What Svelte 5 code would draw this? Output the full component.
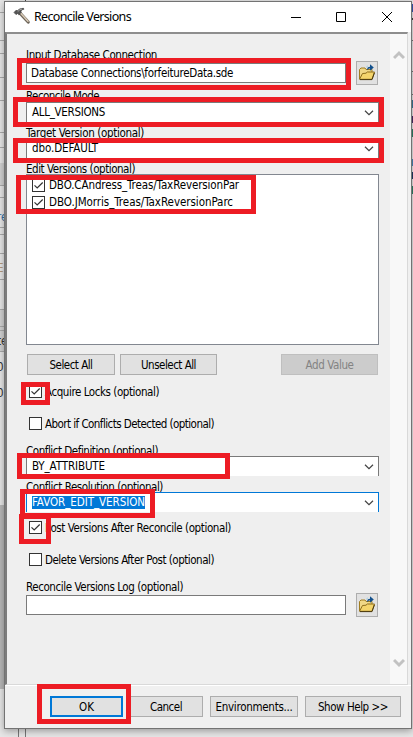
<script>
  // Adjusts tracking so that a caption fills its designed width.
  function fit(node, width) {
    const range = document.createRange();
    range.selectNodeContents(node);
    const natural = range.getBoundingClientRect().width;
    const count = node.textContent.length;
    node.style.letterSpacing = `${(width - natural) / count}px`;
  }
  const versions = [
    { name: 'DBO.CAndress_Treas/TaxReversionPar', w: 190 },
    { name: 'DBO.JMorris_Treas/TaxReversionParc', w: 184 }
  ];
  const marks = [
    [17, 58, 334, 32], [13, 97, 371, 30], [13, 138, 371, 25],
    [16, 175, 240, 39], [21, 382, 29, 23], [17, 453, 213, 26],
    [20, 489, 135, 29], [19, 514, 32, 30], [37, 684, 94, 40]
  ];
  const leftLines = [12, 40, 53, 77, 100, 132, 147, 185, 197, 227, 234, 253, 279, 309, 326, 330, 351];
  const leftText = [
    ['re', 211, '#2f6fa5'], ['E', 262, '#b49a7c'], ['te', 335, '#333'],
    ['0', 361, '#333'], ['0', 387, '#333']
  ];
  const rightBits = [[4, 8, '#3956b0'], [18, 2, '#444'], [40, 1, '#777'], [71, 1, '#777'], [94, 1, '#777'], [100, 8, '#3e7a9b'], [116, 7, '#4a2a66'], [129, 8, '#2e8068'], [159, 7, '#4b88b8'], [172, 7, '#223a66'], [186, 8, '#2e8068']];
</script>

{#snippet label(text, w)}
  <div class="label"><span use:fit={w}>{text}</span></div>
{/snippet}

{#snippet box(checked)}
  <svg class="box" width="13" height="13" viewBox="0 0 13 13">
    <rect x=".5" y=".5" width="12" height="12" fill="#fff" stroke="#333" />
    {#if checked}<path d="M2.5 6.3 5.2 9 10.7 3.5" fill="none" stroke="#333" stroke-width="1.2" />{/if}
  </svg>
{/snippet}

{#snippet check(text, w, checked)}
  <div class="check">{@render box(checked)}<span use:fit={w}>{text}</span></div>
{/snippet}

{#snippet combo(text, w, focus)}
  <div class="combo" class:focus>
    <span class="value" class:selected={focus} use:fit={w}>{text}</span>
    <svg width="10" height="6" viewBox="0 0 10 6"><path d="M1 .8 5 4.6 9 .8" fill="none" stroke="#444" stroke-width="1.25" /></svg>
  </div>
{/snippet}

{#snippet folder()}
  <div class="folder">
    <svg width="18" height="18" viewBox="0 0 18 18">
      <path d="M1.5 15V5.5L3 4h4l1 1.5h6V9" fill="#f0d887" stroke="#a07c20" />
      <path d="M1.5 15.3 4.5 9.5 8 9.2 9.3 8H16.5L14 15.3z" fill="#f4d56c" stroke="#8d6d1b" />
      <path d="M2 15.6H14L16.4 9" fill="none" stroke="#4a3a10" />
      <path d="M9 5.2Q9.3 2.8 12 2.8V.3L15.8 3.5 12 6.8V4.6Q10.4 4.5 9.8 6z" fill="#12508c" />
      <path d="M8.2 3.2 10 1.8" stroke="#9fd0e8" />
    </svg>
  </div>
{/snippet}

<main>
  <div class="backdrop">
    <i class="band one"></i><i class="band two"></i><i class="band three"></i>
    {#each leftLines as y}<i class="rule" style="top:{y}px"></i>{/each}
    {#each leftText as [t, y, c]}<b style="top:{y}px;color:{c}">{t}</b>{/each}
    {#each rightBits as [y, h, c]}<i class="bit" style="top:{y}px;height:{h}px;background:{c}"></i>{/each}
    <i class="seam top"></i><i class="seam bottom"></i>
  </div>

  <section class="window">
    <header>
      <svg class="hammer" width="18" height="18" viewBox="0 0 18 18">
        <path d="M7 6.2 15.2 15" stroke="#6d6459" stroke-width="3.2" stroke-linecap="round" />
        <path d="M7.2 5.8 15 14.2" stroke="#d9cbb7" stroke-width="1.5" stroke-linecap="round" />
        <path d="M1 5.5 3 3.3 4.2 3.8Q6.5 1 10.5 1.3L11 2.2Q8.5 2.4 7.9 4.3L8.4 5.3 5.8 7.8 4.8 6.4 3 7.6z" fill="#555" stroke="#393939" stroke-width=".6" />
        <path d="M4.7 4.6Q6.5 2.5 9 2" stroke="#aaa" fill="none" />
      </svg>
      <span class="title" use:fit={97}>Reconcile Versions</span>
      <svg class="controls" width="104" height="12" viewBox="0 0 104 12" fill="none" stroke="#000">
        <path d="M1 6.5H11M46.5 1.5H55.5V10.5H46.5zM92 1 102 11M102 1 92 11" />
      </svg>
    </header>

    <div class="panel">
      <div class="form">
        {@render label('Input Database Connection', 131)}
        <div class="field">
          <div class="input"><span use:fit={202}>Database Connections\forfeitureData.sde</span></div>
          {@render folder()}
        </div>
        {@render label('Reconcile Mode', 73)}
        {@render combo('ALL_VERSIONS', 73, false)}
        {@render label('Target Version (optional)', 118)}
        {@render combo('dbo.DEFAULT', 66, false)}
        {@render label('Edit Versions (optional)', 109)}
        <div class="list">
          {#each versions as v}{@render check(v.name, v.w, true)}{/each}
        </div>
        <div class="actions">
          <div class="button select"><span use:fit={43}>Select All</span></div>
          <div class="button unselect"><span use:fit={55}>Unselect All</span></div>
          <div class="button add"><span use:fit={48}>Add Value</span></div>
        </div>
        <div class="checks first">
          {@render check('Acquire Locks (optional)', 114, true)}
          {@render check('Abort if Conflicts Detected (optional)', 169, false)}
        </div>
        {@render label('Conflict Definition (optional)', 132)}
        {@render combo('BY_ATTRIBUTE', 73, false)}
        {@render label('Conflict Resolution (optional)', 137)}
        {@render combo('FAVOR_EDIT_VERSION', 113, true)}
        <div class="checks second">
          {@render check('Post Versions After Reconcile (optional)', 186, true)}
          {@render check('Delete Versions After Post (optional)', 169, false)}
        </div>
        {@render label('Reconcile Versions Log (optional)', 157)}
        <div class="field"><div class="input"></div>{@render folder()}</div>
      </div>
      <div class="scroll">
        <svg width="12" height="10" viewBox="0 0 12 10"><path d="M1 8 6 3 11 8" fill="none" stroke="#c2c2c2" stroke-width="3" /></svg>
        <svg width="12" height="10" viewBox="0 0 12 10"><path d="M1 2 6 7 11 2" fill="none" stroke="#c2c2c2" stroke-width="3" /></svg>
      </div>
    </div>

    <footer>
      <div class="button ok"><span use:fit={15}>OK</span></div>
      <div class="button cancel"><span use:fit={32}>Cancel</span></div>
      <div class="button env"><span use:fit={77}>Environments...</span></div>
      <div class="button help"><span use:fit={70}>Show Help &gt;&gt;</span></div>
    </footer>
  </section>

  {#each marks as [x, y, w, h]}
    <div class="mark" style="left:{x}px;top:{y}px;width:{w}px;height:{h}px"></div>
  {/each}
</main>

<style>
  main {
    position: relative;
    width: 413px;
    height: 737px;
    overflow: hidden;
    box-sizing: border-box;
    padding: 1px 1px 0 4px;
    background: #e6e6e6;
    font: 11.5px/13px "DejaVu Sans Condensed", "DejaVu Sans", sans-serif;
    color: #000;
  }
  main * { box-sizing: border-box; }
  svg { display: block; flex: none; }
  span { white-space: pre; }
  .backdrop { position: absolute; inset: 0; overflow: hidden; }
  .backdrop i, .backdrop b { position: absolute; }
  .backdrop b { left: -3px; font-weight: 400; }
  .rule { left: 0; width: 5px; height: 1px; background: #aaa; }
  .bit { right: 0; width: 1px; }
  .band { left: 0; width: 5px; background: #d2d2d2; }
  .one { top: 163px; height: 23px; }
  .two { top: 310px; height: 41px; }
  .three { top: 505px; height: 184px; background: #b8b8b8; }
  .seam.top { left: 25px; top: 0; width: 1px; height: 1px; background: #444; }
  .seam.bottom { left: 18px; top: 729px; width: 8px; height: 8px; border: solid #777; border-width: 0 1px; }
  .window {
    position: relative;
    width: 408px;
    height: 728px;
    border: 1px solid #737373;
    background: #f0f0f0;
    box-shadow: 0 2px 7px #0005;
  }
  header {
    display: flex;
    align-items: center;
    height: 30px;
    padding: 0 17px 0 8px;
    background: #fff;
  }
  .title { margin-left: 3px; font: 12.5px/16px "Noto Sans", sans-serif; }
  .hammer { margin-top: -2px; }
  .controls { margin-left: auto; }
  .panel {
    display: flex;
    height: 653px;
    border: 1px solid #d9d9d9;
    border-top: 2px solid #8e8e8e;
    border-left: 2px solid #7c7c7c;
    margin-right: 3px;
    background: #efefef;
  }
  .form { width: 383px; padding: 13px 0 0 19px; }
  .label { height: 12px; line-height: 14px; margin-top: 4px; padding-top: 1px; display: flex; align-items: center; }
  .label:first-child { height: 14px; margin-top: 0; }
  .field { display: flex; align-items: center; height: 24px; }
  .input {
    width: 320px;
    height: 20px;
    border: 1px solid #7a7a7a;
    background: #fff;
    padding: 3px 4px;
  }
  .folder {
    margin-left: 10px;
    width: 22px;
    height: 24px;
    border: 1px solid #adadad;
    background: #e1e1e1;
    display: flex;
    justify-content: center;
    align-items: center;
  }
  .field + .label { height: 13px; }
  .combo {
    width: 353px;
    height: 20px;
    border: 1px solid #7a7a7a;
    border-bottom: 0;
    background: #fff;
    display: flex;
    align-items: center;
    justify-content: space-between;
    padding: 0 4px 0 5px;
  }
  .focus { border-color: #0078d7; }
  .selected { background: #0078d7; color: #fff; }
  .list {
    width: 353px;
    height: 171px;
    padding: 4px 5px;
    border: 1px solid #828790;
    background: #fff;
    display: flex;
    flex-direction: column;
    gap: 4px;
  }
  .check { display: flex; align-items: center; gap: 3px; height: 13px; }
  .list .check { gap: 4px; }
  .checks span { line-height: 15px; padding-top: 1px; }
  .actions { display: flex; margin: 9px 0 0 1px; height: 21px; }
  .button {
    height: 21px;
    border: 1px solid #adadad;
    background: #e1e1e1;
    display: flex;
    justify-content: center;
    align-items: center;
  }
  .button span { padding-top: 1px; }
  .select { width: 88px; }
  .unselect { width: 97px; margin-left: 5px; }
  .add { width: 97px; margin-left: 64px; background: #ccc; border-color: #bfbfbf; color: #838383; }
  .checks { display: flex; flex-direction: column; gap: 19px; padding-left: 3px; }
  .first { padding-top: 10px; padding-bottom: 10px; }
  .second { padding-top: 9px; padding-bottom: 10px; }
  .second + .label { height: 13px; }
  .scroll {
    width: 17px;
    background: #f8f8f8;
    display: flex;
    flex-direction: column;
    justify-content: space-between;
    align-items: center;
    padding: 16px 0;
  }
  footer {
    display: flex;
    height: 43px;
    border-top: 1px solid #fff;
    padding: 10px 0 0 45px;
  }
  .ok { width: 73px; border: 2px solid #0078d7; }
  .cancel { width: 74px; margin-left: 6px; }
  .env { width: 88px; margin-left: 7px; }
  .help { width: 96px; margin-left: 7px; }
  .mark { position: absolute; border: 5px solid #ed1c24; }
</style>
